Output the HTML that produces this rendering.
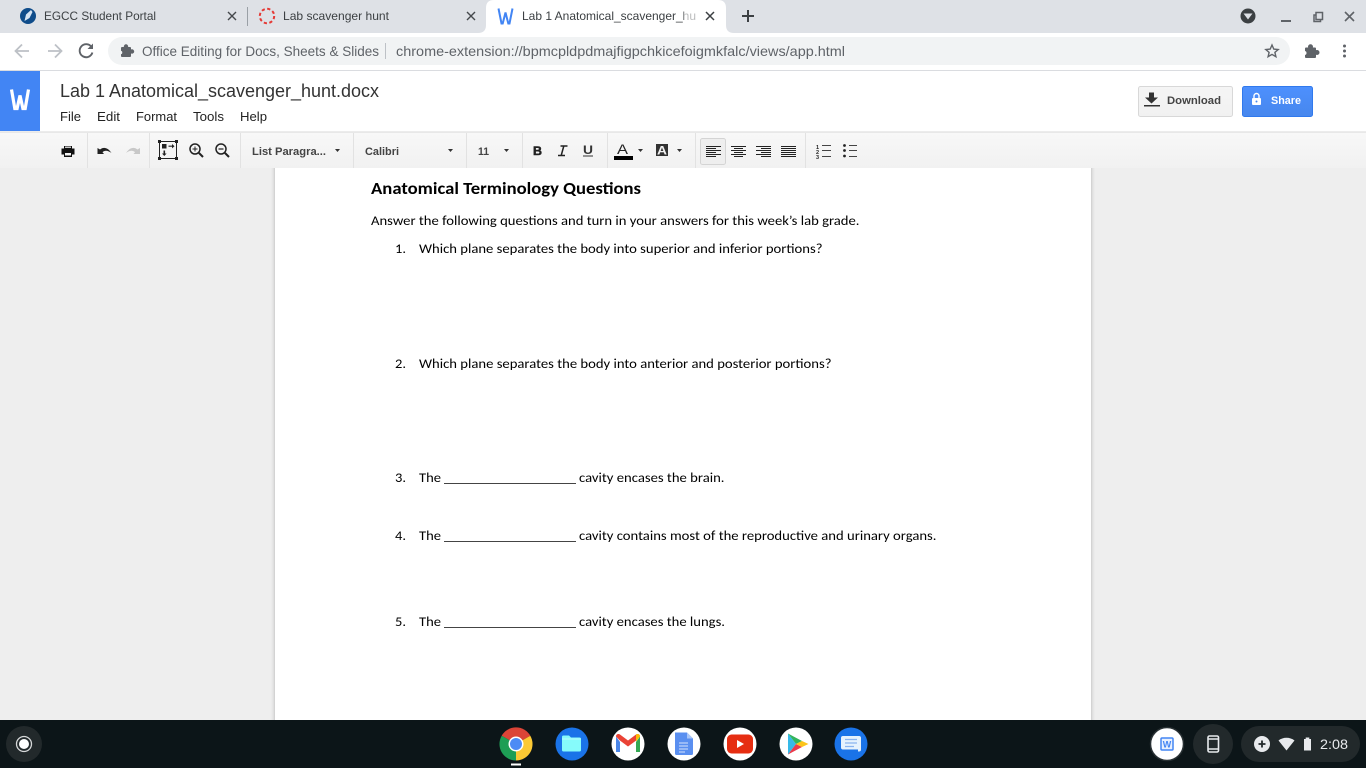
<!DOCTYPE html>
<html lang="en"><head><meta charset="utf-8"><title>Lab 1 Anatomical_scavenger_hunt.docx</title>
<style>
html,body{margin:0;padding:0;width:1366px;height:768px;overflow:hidden;background:#eee}
svg{display:block}
text{font-family:"Liberation Sans",sans-serif}
.doc{font-family:Carlito,"Liberation Sans",sans-serif;fill:#000}
.ui{fill:#3c4043;font-size:12px}
.menu{fill:#222;font-size:13px}
.tb{fill:#444;font-size:11px;font-weight:bold}
</style></head><body>
<svg width="1366" height="768" viewBox="0 0 1366 768" xmlns="http://www.w3.org/2000/svg">
<defs>
<linearGradient id="tbg" x1="0" y1="0" x2="0" y2="1"><stop offset="0" stop-color="#f8f8f8"/><stop offset="1" stop-color="#f1f1f1"/></linearGradient>
<linearGradient id="dl" x1="0" y1="0" x2="0" y2="1"><stop offset="0" stop-color="#f5f5f5"/><stop offset="1" stop-color="#f1f1f1"/></linearGradient>
<linearGradient id="sh" x1="0" y1="0" x2="0" y2="1"><stop offset="0" stop-color="#4d90fe"/><stop offset="1" stop-color="#4787ed"/></linearGradient>
</defs>
<rect width="1366" height="768" fill="#eeeeee"/>

<!-- tab strip -->
<rect width="1366" height="33" fill="#dee1e6"/>
<path d="M478 33q8 0 8-8V8q0-8 8-8h224q8 0 8 8v17q0 8 8 8z" fill="#fff"/>
<rect y="33" width="1366" height="37" fill="#fff"/>
<rect y="70" width="1366" height="1" fill="#dadce0"/>

<circle cx="28" cy="16" r="8" fill="#0f4c8a"/>
<path d="M24.500 21l1.500-6.500 5-4.500 1.500 2-3 6z" fill="#d6e4f2"/>
<text x="44" y="20" class="ui" textLength="112" lengthAdjust="spacingAndGlyphs">EGCC Student Portal</text>
<path d="M228 12l8 8M236 12l-8 8" stroke="#45484c" stroke-width="1.400" fill="none"/>
<rect x="247" y="7" width="1" height="19" fill="#9aa0a6"/>
<circle cx="267" cy="16" r="7.200" fill="none" stroke="#e53935" stroke-width="2" stroke-dasharray="3.200 2.450"/>
<text x="283" y="20" class="ui" textLength="106" lengthAdjust="spacingAndGlyphs">Lab scavenger hunt</text>
<path d="M467 12l8 8M475 12l-8 8" stroke="#45484c" stroke-width="1.400" fill="none"/>

<path d="M498.500 8.500l3 15h1.200l2.800-11 2.800 11h1.200l3-15" fill="none" stroke="#4285f4" stroke-width="2"/>
<text x="522" y="20" class="ui" textLength="174" lengthAdjust="spacingAndGlyphs">Lab 1 Anatomical_scavenger_hu</text>
<rect x="684" y="8" width="14" height="18" fill="#fff" fill-opacity=".65"/>
<path d="M706 12l8 8M714 12l-8 8" stroke="#3c4043" stroke-width="1.500" fill="none"/>
<path d="M748 10v12M742 16h12" stroke="#3c4043" stroke-width="2" fill="none"/>

<circle cx="1248" cy="16" r="7.500" fill="#3c4043"/>
<path d="M1243.500 13.500h9l-4.500 6z" fill="#dee1e6"/>
<rect x="1281" y="20" width="10" height="2" fill="#5f6368"/>
<path d="M1316 15h-2v6.500h6.500v-2.500M1316 15v-2.500h6.500v7h-6.500z" fill="none" stroke="#5f6368" stroke-width="1.500"/>
<path d="M1345 12l9 9M1354 12l-9 9" stroke="#5f6368" stroke-width="1.600" fill="none"/>

<!-- toolbar -->
<path d="M29 51H16M22 44.500l-6.500 6.500 6.500 6.500" fill="none" stroke="#bdc1c6" stroke-width="1.800"/>
<path d="M48 51h13M55 44.500l6.500 6.500-6.500 6.500" fill="none" stroke="#bdc1c6" stroke-width="1.800"/>
<path d="M91.500 47a6.500 6.500 0 1 0 .9 5.500" fill="none" stroke="#5f6368" stroke-width="1.900"/>
<path d="M93 43.500V49h-5.500z" fill="#5f6368"/>
<rect x="108" y="37" width="1182" height="28" rx="14" fill="#f1f3f4"/>
<g fill="#5f6368"><rect x="121" y="47" width="10" height="10" rx="1"/><circle cx="126" cy="46.500" r="2.200"/><circle cx="132" cy="51.500" r="2.200"/></g>
<circle cx="120.500" cy="52.500" r="1.800" fill="#f1f3f4"/>
<text x="142" y="56" font-size="14" fill="#5f6368" textLength="237" lengthAdjust="spacingAndGlyphs">Office Editing for Docs, Sheets &amp; Slides</text>
<rect x="385" y="43" width="1" height="16" fill="#bdc1c6"/>
<text x="396" y="56" font-size="14" fill="#5f6368" textLength="449" lengthAdjust="spacingAndGlyphs">chrome-extension://bpmcpldpdmajfigpchkicefoigmkfalc/views/app.html</text>
<path d="M1272 45l1.800 4.100 4.400.4-3.300 2.900 1 4.300-3.900-2.300-3.900 2.300 1-4.300-3.300-2.900 4.400-.4z" fill="none" stroke="#5f6368" stroke-width="1.400"/>
<g fill="#5f6368"><rect x="1305" y="47.500" width="11" height="10.500" rx="1"/><circle cx="1310.500" cy="46.800" r="2.500"/><circle cx="1317" cy="52.500" r="2.500"/></g>
<circle cx="1304.500" cy="53" r="2" fill="#fff"/>
<circle cx="1344.500" cy="46" r="1.500" fill="#5f6368"/><circle cx="1344.500" cy="51" r="1.500" fill="#5f6368"/><circle cx="1344.500" cy="56" r="1.500" fill="#5f6368"/>

<!-- app header -->
<rect y="71" width="1366" height="60" fill="#fff"/>
<rect y="71" width="40" height="60" fill="#4285f4"/>
<path d="M11.500 89.500l3.300 19h2.300l2.900-13 2.900 13h2.300l3.300-19" fill="none" stroke="#fff" stroke-width="3.200"/>
<text x="60" y="97" font-size="18" fill="#333" textLength="319" lengthAdjust="spacingAndGlyphs">Lab 1 Anatomical_scavenger_hunt.docx</text>
<text x="60" y="121" class="menu" textLength="21" lengthAdjust="spacingAndGlyphs">File</text>
<text x="97" y="121" class="menu" textLength="23" lengthAdjust="spacingAndGlyphs">Edit</text>
<text x="136" y="121" class="menu" textLength="41" lengthAdjust="spacingAndGlyphs">Format</text>
<text x="193" y="121" class="menu" textLength="31" lengthAdjust="spacingAndGlyphs">Tools</text>
<text x="240" y="121" class="menu" textLength="27" lengthAdjust="spacingAndGlyphs">Help</text>

<rect x="1138.500" y="86.500" width="94" height="30" rx="2" fill="url(#dl)" stroke="#d8d8d8"/>
<path d="M1149 92.500h5v5h4l-6.500 6-6.500-6h4z" fill="#333"/><rect x="1144" y="105" width="16" height="1.500" fill="#333"/>
<text x="1167" y="104" font-size="11" font-weight="bold" fill="#444" textLength="54" lengthAdjust="spacingAndGlyphs">Download</text>
<rect x="1242.500" y="86.500" width="70" height="30" rx="2" fill="url(#sh)" stroke="#3079ed"/>
<path d="M1254 98v-2a2.500 2.500 0 0 1 5 0v2" fill="none" stroke="#fff" stroke-width="1.400"/><rect x="1252" y="98" width="9" height="7" rx="1" fill="#fff"/><circle cx="1256.500" cy="101.500" r="1" fill="#4787ed"/>
<text x="1271" y="104" font-size="11" font-weight="bold" fill="#fff" textLength="30" lengthAdjust="spacingAndGlyphs">Share</text>

<!-- format toolbar -->
<rect y="131" width="1366" height="1" fill="#ececec"/>
<rect y="132" width="1366" height="36" fill="url(#tbg)"/>
<rect y="132" width="1366" height="1" fill="#e8e8e8"/>
<g fill="#e2e2e2">
<rect x="87" y="133" width="1" height="35"/><rect x="149" y="133" width="1" height="35"/><rect x="240" y="133" width="1" height="35"/><rect x="353" y="133" width="1" height="35"/><rect x="466" y="133" width="1" height="35"/><rect x="522" y="133" width="1" height="35"/><rect x="607" y="133" width="1" height="35"/><rect x="695" y="133" width="1" height="35"/><rect x="805" y="133" width="1" height="35"/>
</g>
<path d="M64 146h8v2.500h2.500v6H72V157h-8v-2.500h-2.500v-6H64z" fill="#111"/><rect x="65" y="153" width="6" height="2.500" fill="#f5f5f5"/><rect x="65" y="146.600" width="6" height="1.200" fill="#f5f5f5"/>
<path d="M100 149.500c3.500-3 8-2 11.500 3.500-3.500-2.500-6.500-3-9-.8l1.500 1.800h-6.500v-6z" fill="#222"/>
<path d="M137.500 149.500c-3.500-3-8-2-11.500 3.500 3.500-2.500 6.500-3 9-.8l-1.500 1.800h6.500v-6z" fill="#c8c8c8"/>
<rect x="159.500" y="141.500" width="17" height="17" fill="none" stroke="#222" stroke-width="1"/>
<g fill="#222"><rect x="158" y="140" width="3" height="3"/><rect x="175" y="140" width="3" height="3"/><rect x="158" y="157" width="3" height="3"/><rect x="175" y="157" width="3" height="3"/><rect x="162" y="144" width="4.500" height="4.500"/><path d="M168.500 145.600h3.500v-1.600l2.500 2.200-2.500 2.200v-1.600h-3.500zM163.500 150.500h1.600v3h1.500l-2.300 2.500-2.300-2.500h1.500z"/></g>
<g fill="none" stroke="#222" stroke-width="1.500"><circle cx="195" cy="149" r="5"/><path d="M199 153l4 4" stroke-width="2"/><path d="M192.500 149h5M195 146.500v5" stroke-width="1"/><circle cx="221" cy="149" r="5"/><path d="M225 153l4 4" stroke-width="2"/><path d="M218.500 149h5" stroke-width="1.200"/></g>
<text x="252" y="155" class="tb" textLength="74" lengthAdjust="spacingAndGlyphs">List Paragra...</text>
<path d="M335 149h5l-2.500 3z" fill="#333"/>
<text x="365" y="155" class="tb" textLength="34" lengthAdjust="spacingAndGlyphs">Calibri</text>
<path d="M448 149h5l-2.500 3z" fill="#333"/>
<text x="478" y="155" class="tb" textLength="11" lengthAdjust="spacingAndGlyphs">11</text>
<path d="M504 149h5l-2.500 3z" fill="#333"/>
<text x="533" y="155" font-size="12" font-weight="bold" fill="#222" stroke="#222" stroke-width=".5" textLength="9" lengthAdjust="spacingAndGlyphs">B</text>
<path d="M560.500 146h7M558 155.500h7M563.800 146l-2.600 9.500" fill="none" stroke="#222" stroke-width="1.500"/>
<text x="583" y="154" font-size="12" font-weight="bold" fill="#333" textLength="10" lengthAdjust="spacingAndGlyphs">U</text>
<rect x="583" y="155.500" width="10" height="1" fill="#333"/>
<text x="617" y="154" font-size="14" fill="#222" textLength="11" lengthAdjust="spacingAndGlyphs">A</text>
<rect x="614" y="156" width="19" height="4" fill="#000"/>
<path d="M638 149h5l-2.500 3z" fill="#333"/>
<rect x="656" y="144" width="12" height="12" fill="#333"/>
<text x="657" y="154.500" font-size="12" font-weight="bold" fill="#f2f2f2" textLength="10" lengthAdjust="spacingAndGlyphs">A</text>
<path d="M677 149h5l-2.500 3z" fill="#333"/>
<rect x="700.500" y="138.500" width="25" height="26" rx="2" fill="#eeeeee" stroke="#d4d4d4"/>
<g stroke="#222" stroke-width="1" fill="none">
<path d="M706 146.500h15M706 148.500h10M706 150.500h15M706 152.500h10M706 154.500h15M706 156.500h10"/>
<path d="M731 146.500h15M734 148.500h9M731 150.500h15M734 152.500h9M731 154.500h15M734 156.500h9"/>
<path d="M756 146.500h15M761 148.500h10M756 150.500h15M761 152.500h10M756 154.500h15M761 156.500h10"/>
<path d="M781 146.500h15M781 148.500h15M781 150.500h15M781 152.500h15M781 154.500h15M781 156.500h15"/>
<path d="M822 145.500h9M822 150.500h9M822 156.500h9M849 145.500h8M849 150.500h8M849 156.500h8" stroke="#444"/>
</g>
<text x="816" y="149" font-size="5.500" font-weight="bold" fill="#222">1</text><text x="816" y="154" font-size="5.500" font-weight="bold" fill="#222">2</text><text x="816" y="159" font-size="5.500" font-weight="bold" fill="#222">3</text>
<circle cx="844.500" cy="145.500" r="1.400" fill="#222"/><circle cx="844.500" cy="150.500" r="1.400" fill="#222"/><circle cx="844.500" cy="156" r="1.400" fill="#222"/>

<!-- document -->
<rect x="271" y="168" width="824" height="552" fill="#ebebeb"/>
<rect x="272" y="168" width="822" height="552" fill="#e6e6e6"/>
<rect x="273" y="168" width="820" height="552" fill="#dfdfdf"/>
<rect x="274" y="168" width="818" height="552" fill="#d3d3d3"/>
<rect x="275" y="168" width="816" height="552" fill="#fff"/>
<text x="371" y="194" class="doc" font-size="17" font-weight="bold" textLength="270" lengthAdjust="spacingAndGlyphs">Anatomical Terminology Questions</text>
<text x="371" y="225" class="doc" font-size="13" textLength="488.500" lengthAdjust="spacingAndGlyphs">Answer the following questions and turn in your answers for this week’s lab grade.</text>
<text x="395" y="253" class="doc" font-size="13" textLength="11" lengthAdjust="spacingAndGlyphs">1.</text>
<text x="419" y="253" class="doc" font-size="13" textLength="403.500" lengthAdjust="spacingAndGlyphs">Which plane separates the body into superior and inferior portions?</text>
<text x="395" y="368" class="doc" font-size="13" textLength="11" lengthAdjust="spacingAndGlyphs">2.</text>
<text x="419" y="368" class="doc" font-size="13" textLength="412.500" lengthAdjust="spacingAndGlyphs">Which plane separates the body into anterior and posterior portions?</text>
<text x="395" y="482" class="doc" font-size="13" textLength="11" lengthAdjust="spacingAndGlyphs">3.</text>
<text x="419" y="482" class="doc" font-size="13" textLength="22" lengthAdjust="spacingAndGlyphs">The</text>
<rect x="444" y="483" width="132" height="1" fill="#444"/>
<text x="579" y="482" class="doc" font-size="13" textLength="145.500" lengthAdjust="spacingAndGlyphs">cavity encases the brain.</text>
<text x="395" y="540" class="doc" font-size="13" textLength="11" lengthAdjust="spacingAndGlyphs">4.</text>
<text x="419" y="540" class="doc" font-size="13" textLength="22" lengthAdjust="spacingAndGlyphs">The</text>
<rect x="444" y="541" width="132" height="1" fill="#444"/>
<text x="579" y="540" class="doc" font-size="13" textLength="357.500" lengthAdjust="spacingAndGlyphs">cavity contains most of the reproductive and urinary organs.</text>
<text x="395" y="626" class="doc" font-size="13" textLength="11" lengthAdjust="spacingAndGlyphs">5.</text>
<text x="419" y="626" class="doc" font-size="13" textLength="22" lengthAdjust="spacingAndGlyphs">The</text>
<rect x="444" y="627" width="132" height="1" fill="#444"/>
<text x="579" y="626" class="doc" font-size="13" textLength="146" lengthAdjust="spacingAndGlyphs">cavity encases the lungs.</text>

<!-- shelf -->
<rect y="720" width="1366" height="48" fill="#0c1518"/>
<circle cx="24" cy="744" r="18" fill="#22292b"/>
<circle cx="24" cy="744" r="7.500" fill="none" stroke="#d5d7d8" stroke-width="1.300"/><circle cx="24" cy="744" r="5" fill="#fff"/>

<!-- chrome -->
<path d="M516 744L501.700 735.700A16.500 16.500 0 0 1 530.300 735.700z" fill="#db4437"/>
<path d="M516 744L530.300 735.700A16.500 16.500 0 0 1 516 760.500z" fill="#fcc934"/>
<path d="M516 744L516 760.500A16.500 16.500 0 0 1 501.700 735.700z" fill="#1e9e55"/>
<circle cx="516" cy="744" r="7.500" fill="#fff"/><circle cx="516" cy="744" r="6" fill="#4d8bf5"/>
<rect x="511" y="763.500" width="10" height="2" fill="#fff"/>
<!-- files -->
<circle cx="572" cy="744" r="16.500" fill="#1a73e8"/>
<path d="M562 737a1.500 1.500 0 0 1 1.500-1.500h5.500l2 2h8.500a1.500 1.500 0 0 1 1.500 1.500v11a1.500 1.500 0 0 1-1.500 1.500h-16a1.500 1.500 0 0 1-1.500-1.500z" fill="#86fbfb"/>
<rect x="562" y="738.500" width="19" height="1" fill="#b8fdfd"/>
<!-- gmail -->
<circle cx="628" cy="744" r="16.500" fill="#fff"/>
<path d="M616 736.500v15.500h4v-10z" fill="#4a86e8"/>
<path d="M640 736.500v15.500h-4v-10z" fill="#34a853"/>
<path d="M616 736.500c0-2.500 2.500-3 4-2l8 6 8-6c1.500-1 4-.5 4 2l-3.900 4-8.100 6-8.100-6z" fill="#ea4335"/>
<path d="M636 734.500c1.500-1 4-.5 4 2l-4 5z" fill="#fbbc04"/>
<!-- docs -->
<circle cx="684" cy="744" r="16.500" fill="#fff"/>
<path d="M675 732.500h12l6 6v15a1.500 1.500 0 0 1-1.500 1.500h-15a1.500 1.500 0 0 1-1.500-1.500z" fill="#5a8ff0"/>
<path d="M687 732.500l6 6h-6z" fill="#a9c5f7"/>
<path d="M679 743h9M679 746h9M679 749h9M679 752h6" stroke="#d5e3fb" stroke-width="1"/>
<!-- youtube -->
<circle cx="740" cy="744" r="16.500" fill="#fff"/>
<rect x="727" y="734.500" width="26" height="19" rx="4.500" fill="#e62e12"/>
<path d="M737 740v8l7-4z" fill="#fff"/>
<!-- play -->
<circle cx="796" cy="744" r="16.500" fill="#fff"/>
<path d="M788 733.500v10.500h8z" fill="#36b9e8"/>
<path d="M788 754.500V744h8z" fill="#36b9e8"/>
<path d="M788 733.500l14 7.500-6 3z" fill="#33b45c"/>
<path d="M788 754.500l14-7.500-6-3z" fill="#ea3b4b"/>
<path d="M802 741l6.500 3-6.500 3-6-3z" fill="#fcc419"/>
<!-- messages -->
<circle cx="851" cy="744" r="16.500" fill="#1a73e8"/>
<path d="M843 736h16a2 2 0 0 1 2 2v11.500a2 2 0 0 1-2 2h-1v-2h-15a2 2 0 0 1-2-2v-9.500a2 2 0 0 1 2-2z" fill="#e6f2fd"/>
<path d="M845 739.500h12M845 743h12M845 746.500h9" stroke="#8ab4f0" stroke-width="1.300"/>

<!-- status -->
<circle cx="1167" cy="744" r="16.500" fill="#fff" stroke="#283033" stroke-width="1.500"/>
<rect x="1161" y="738" width="12" height="12" rx="1" fill="#e8f0fe" stroke="#4285f4" stroke-width="1.500"/>
<text x="1167" y="747.500" text-anchor="middle" font-size="9" font-weight="bold" fill="#4285f4">W</text>
<circle cx="1213" cy="744" r="20" fill="#22292b"/>
<rect x="1208" y="736" width="10.500" height="16" rx="1.500" fill="none" stroke="#e8eaed" stroke-width="1.600"/>
<path d="M1208 739h10.500M1208 749h10.500" stroke="#e8eaed" stroke-width="1.600"/>
<rect x="1241" y="726" width="119" height="36" rx="18" fill="#22292b"/>
<circle cx="1262" cy="744" r="8" fill="#e8eaed"/><path d="M1258.500 744h7M1262 740.500v7" stroke="#22292b" stroke-width="1.800"/>
<path d="M1278.500 740.500a13 13 0 0 1 16 0l-8 10z" fill="#e8eaed"/>
<path d="M1304 739.500h1.700v-1.500h3.600v1.500h1.700V751h-7z" fill="#e8eaed" transform="translate(0 -.5)"/>
<text x="1320" y="749" font-size="14" fill="#e8eaed" textLength="28" lengthAdjust="spacingAndGlyphs">2:08</text>
</svg>
</body></html>
